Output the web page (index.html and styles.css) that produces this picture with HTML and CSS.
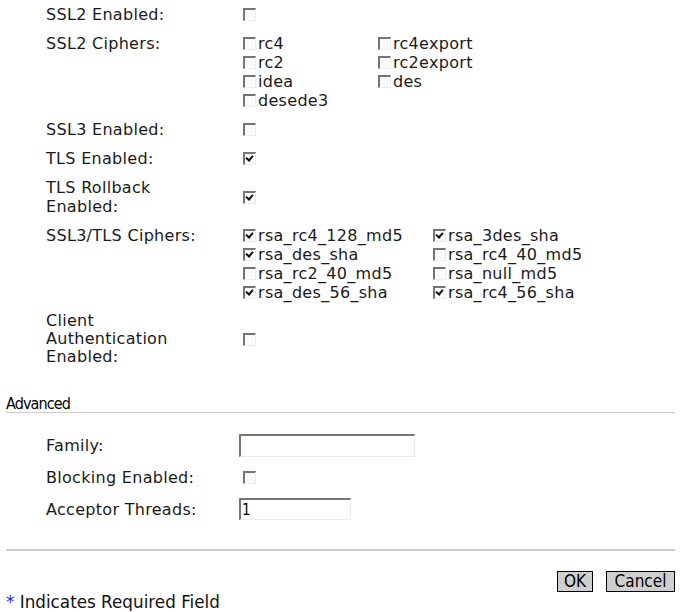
FILE: index.html
```html
<!DOCTYPE html>
<html>
<head>
<meta charset="utf-8">
<link rel="stylesheet" href="styles.css">
</head>
<body>
<div class="page">
  <div class="form">
    <div class="label">SSL2 Enabled:</div>
    <div class="ctl mid"><input type="checkbox" class="cb"></div>

    <div class="label">SSL2 Ciphers:</div>
    <div class="ctl"><div class="ciphers c2">
      <label class="opt"><input type="checkbox" class="cb">rc4</label>
      <label class="opt"><input type="checkbox" class="cb">rc4export</label>
      <label class="opt"><input type="checkbox" class="cb">rc2</label>
      <label class="opt"><input type="checkbox" class="cb">rc2export</label>
      <label class="opt"><input type="checkbox" class="cb">idea</label>
      <label class="opt"><input type="checkbox" class="cb">des</label>
      <label class="opt"><input type="checkbox" class="cb">desede3</label>
    </div></div>

    <div class="label">SSL3 Enabled:</div>
    <div class="ctl mid"><input type="checkbox" class="cb"></div>

    <div class="label">TLS Enabled:</div>
    <div class="ctl mid"><input type="checkbox" class="cb" checked></div>

    <div class="label">TLS Rollback<br>Enabled:</div>
    <div class="ctl mid"><input type="checkbox" class="cb" checked></div>

    <div class="label">SSL3/TLS Ciphers:</div>
    <div class="ctl"><div class="ciphers c3">
      <label class="opt"><input type="checkbox" class="cb" checked>rsa_rc4_128_md5</label>
      <label class="opt"><input type="checkbox" class="cb" checked>rsa_3des_sha</label>
      <label class="opt"><input type="checkbox" class="cb" checked>rsa_des_sha</label>
      <label class="opt"><input type="checkbox" class="cb">rsa_rc4_40_md5</label>
      <label class="opt"><input type="checkbox" class="cb">rsa_rc2_40_md5</label>
      <label class="opt"><input type="checkbox" class="cb">rsa_null_md5</label>
      <label class="opt"><input type="checkbox" class="cb" checked>rsa_des_56_sha</label>
      <label class="opt"><input type="checkbox" class="cb" checked>rsa_rc4_56_sha</label>
    </div></div>

    <div class="label tight">Client<br>Authentication<br>Enabled:</div>
    <div class="ctl mid"><input type="checkbox" class="cb"></div>
  </div>

  <h2 class="section">Advanced</h2>

  <div class="form adv">
    <div class="label mid">Family:</div>
    <div class="ctl mid"><input type="text" class="txt wide"></div>

    <div class="label">Blocking Enabled:</div>
    <div class="ctl mid"><input type="checkbox" class="cb"></div>

    <div class="label mid">Acceptor Threads:</div>
    <div class="ctl mid"><input type="text" class="txt narrow" value="1"></div>
  </div>

  <hr class="rule">

  <div class="buttons">
    <button class="btn ok">OK</button>
    <button class="btn cancel">Cancel</button>
  </div>

  <div class="footer"><span class="req">*</span> Indicates Required Field</div>
</div>
</body>
</html>
```

FILE: styles.css
```css
html, body {
  margin: 0;
  padding: 0;
  background: #fff;
}

body {
  font-family: "DejaVu Sans", Verdana, sans-serif;
  font-size: 16px;
  letter-spacing: 0.3px;
  color: #1a1a1a;
}

.page {
  width: 669px;
  padding: 0 12px 0 6px;
}

.form {
  display: grid;
  grid-template-columns: 193px 1fr;
  row-gap: 10px;
  padding: 5px 0 5px 40px;
}

.label {
  line-height: 19px;
}

.label.tight {
  line-height: 18px;
}

.ctl {
  line-height: 19px;
}

.mid {
  align-self: center;
  display: flex;
  align-items: center;
}

.cb {
  -webkit-appearance: none;
  appearance: none;
  box-sizing: border-box;
  width: 13px;
  height: 13px;
  margin: 0 0 0 4px;
  border-style: solid;
  border-width: 2px 1px 1px 2px;
  border-color: #76766e #ececec #ececec #76766e;
  background: #fafafa;
  position: relative;
  flex: none;
}

.cb:checked::after {
  content: "";
  position: absolute;
  left: 2px;
  top: 0px;
  width: 3px;
  height: 5px;
  border-right: 2px solid #111;
  border-bottom: 2px solid #111;
  transform: rotate(40deg);
  transform-origin: 50% 50%;
}

.ciphers {
  display: grid;
}

.ciphers.c2 {
  grid-template-columns: 135px auto;
}

.ciphers.c3 {
  grid-template-columns: 190px auto;
}

.opt {
  display: flex;
  align-items: center;
  height: 19px;
  white-space: nowrap;
}

.opt .cb {
  margin-right: 2px;
}

.section {
  margin: 24px 0 0 0;
  font-family: "DejaVu Sans Condensed", "DejaVu Sans", sans-serif;
  font-stretch: condensed;
  font-weight: normal;
  font-size: 16px;
  letter-spacing: -0.9px;
  line-height: 17px;
  color: #000;
  border-bottom: 1px solid #cccccc;
}

.form.adv {
  padding-top: 21px;
  padding-bottom: 0;
  row-gap: 11px;
}

.txt {
  box-sizing: border-box;
  margin: 0;
  padding: 0 1px;
  border-style: solid;
  border-width: 2px 1px 1px 2px;
  border-color: #76766e #ececec #ececec #76766e;
  background: #fff;
  font-family: "DejaVu Sans Condensed", "DejaVu Sans", sans-serif;
  font-stretch: condensed;
  font-size: 15px;
  color: #000;
}

.txt.wide {
  width: 176px;
  height: 23px;
}

.txt.narrow {
  width: 112px;
  height: 22px;
}

.rule {
  margin: 29px 0 0 0;
  border: 0;
  height: 2px;
  background: #cccccc;
}

.buttons {
  display: flex;
  justify-content: flex-end;
  gap: 13px;
  margin-top: 20px;
}

.btn {
  box-sizing: border-box;
  height: 21px;
  margin: 0;
  padding: 0;
  border: 1px solid #000;
  background: #cfcfcf;
  font-family: "DejaVu Sans Condensed", "DejaVu Sans", sans-serif;
  font-stretch: condensed;
  font-size: 17px;
  letter-spacing: 0;
  line-height: 19px;
  color: #000;
}

.btn.ok {
  width: 36px;
}

.btn.cancel {
  width: 69px;
}

.footer {
  font-family: "DejaVu Sans", Verdana, sans-serif;
  font-size: 16.8px;
  letter-spacing: 0;
  line-height: 18px;
  margin-top: 1px;
  color: #111;
}

.req {
  color: #1a1aff;
}
```
